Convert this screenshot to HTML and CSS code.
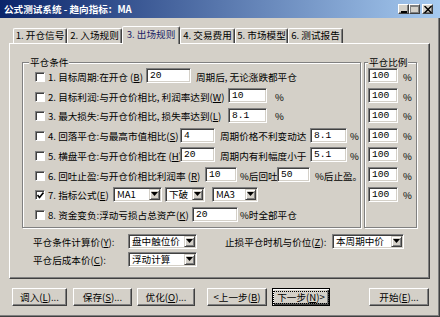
FILE: index.html
```html
<!DOCTYPE html>
<html>
<head>
    <meta charset="UTF-8">
    <title>公式测试系统</title>
    <link rel="stylesheet" href="styles.css">
</head>
<body>
<div class="window">
    <div class="titlebar">
        <span class="title">公式测试系统 - 趋向指标：MA</span>
        <div class="caption-btns">
            <span class="cap-btn"><svg width="8" height="7"><rect x="1" y="5" width="6" height="2"/></svg></span>
            <span class="cap-btn"><svg width="9" height="8"><rect x="0.5" y="0.5" width="8" height="7" fill="none" stroke="#808080"/><rect x="0" y="1" width="9" height="1" fill="#808080"/></svg></span>
            <span class="cap-btn close"><svg width="8" height="7"><path d="M0.5 0 L7.5 7 M7.5 0 L0.5 7" stroke="#000" stroke-width="1.5"/></svg></span>
        </div>
    </div>

    <div class="tabs">
        <span class="tab t1">1. 开仓信号</span>
        <span class="tab t2">2. 入场规则</span>
        <span class="tab t3 active">3. 出场规则</span>
        <span class="tab t4">4. 交易费用</span>
        <span class="tab t5">5. 市场模型</span>
        <span class="tab t6">6. 测试报告</span>
    </div>

    <div class="panel">
        <div class="groups">
            <fieldset class="group cond">
                <legend>平仓条件</legend>
                <div class="rows">
                    <div class="row">
                        <span class="check"></span>
                        <span class="lbl w98">1. 目标周期:在开仓 (<u>B</u>)</span>
                        <span class="edit e45">20</span>
                        <span class="txt m5">周期后, 无论涨跌都平仓</span>
                    </div>
                    <div class="row">
                        <span class="check"></span>
                        <span class="lbl w180">2. 目标利润:与开仓价相比, 利润率达到(<u>W</u>)</span>
                        <span class="edit e39">10</span>
                        <span class="txt m8">%</span>
                    </div>
                    <div class="row">
                        <span class="check"></span>
                        <span class="lbl w180">3. 最大损失:与开仓价相比, 损失率达到(<u>L</u>)</span>
                        <span class="edit e39">8.1</span>
                        <span class="txt m8">%</span>
                    </div>
                    <div class="row">
                        <span class="check"></span>
                        <span class="lbl w132">4. 回落平仓:与最高市值相比(<u>S</u>)</span>
                        <span class="edit e35">4</span>
                        <span class="txt m5 w90">周期价格不利变动达</span>
                        <span class="edit e37">8.1</span>
                        <span class="txt m3">%</span>
                    </div>
                    <div class="row">
                        <span class="check"></span>
                        <span class="lbl w132">5. 横盘平仓:与开仓价相比在 (<u>H</u>)</span>
                        <span class="edit e35">20</span>
                        <span class="txt m5 w90">周期内有利幅度小于</span>
                        <span class="edit e37">5.1</span>
                        <span class="txt m3">%</span>
                    </div>
                    <div class="row">
                        <span class="check"></span>
                        <span class="lbl w157">6. 回吐止盈:与开仓价相比利润率 (<u>R</u>)</span>
                        <span class="edit e32">10</span>
                        <span class="txt m3 w37">%后回吐</span>
                        <span class="edit e33">50</span>
                        <span class="txt m5">%后止盈。</span>
                    </div>
                    <div class="row">
                        <span class="check"><svg width="7" height="7"><path d="M0.5 3 L2.5 5.5 L6.5 0.5" stroke="#000" stroke-width="1.6" fill="none"/></svg></span>
                        <span class="lbl w65">7. 指标公式(<u>E</u>)</span>
                        <span class="combo c49"><span>MA1</span><span class="drop"><svg width="7" height="4"><polygon points="0,0 7,0 3.5,4"/></svg></span></span>
                        <span class="combo c40 m3"><span>下破</span><span class="drop"><svg width="7" height="4"><polygon points="0,0 7,0 3.5,4"/></svg></span></span>
                        <span class="combo c46 m7"><span>MA3</span><span class="drop"><svg width="7" height="4"><polygon points="0,0 7,0 3.5,4"/></svg></span></span>
                    </div>
                    <div class="row">
                        <span class="check"></span>
                        <span class="lbl w144">8. 资金变负:浮动亏损占总资产(<u>K</u>)</span>
                        <span class="edit e46">20</span>
                        <span class="txt m2">%时全部平仓</span>
                    </div>
                </div>
            </fieldset>

            <fieldset class="group ratio">
                <legend>平仓比例</legend>
                <div class="rows">
                    <div class="row"><span class="edit e30">100</span><span class="txt m5">%</span></div>
                    <div class="row"><span class="edit e30">100</span><span class="txt m5">%</span></div>
                    <div class="row"><span class="edit e30">100</span><span class="txt m5">%</span></div>
                    <div class="row"><span class="edit e30">100</span><span class="txt m5">%</span></div>
                    <div class="row"><span class="edit e30">100</span><span class="txt m5">%</span></div>
                    <div class="row"><span class="edit e30">100</span><span class="txt m5">%</span></div>
                    <div class="row"><span class="edit e30">100</span><span class="txt m5">%</span></div>
                </div>
            </fieldset>
        </div>

        <div class="fields">
            <div class="field-row">
                <span class="lbl w95">平仓条件计算价(<u>Y</u>):</span>
                <span class="combo c69"><span>盘中触位价</span><span class="drop"><svg width="7" height="4"><polygon points="0,0 7,0 3.5,4"/></svg></span></span>
                <span class="lbl w107 m28">止损平仓时机与价位(<u>Z</u>):</span>
                <span class="combo c72"><span>本周期中价</span><span class="drop"><svg width="7" height="4"><polygon points="0,0 7,0 3.5,4"/></svg></span></span>
            </div>
            <div class="field-row">
                <span class="lbl w95">平仓后成本价(<u>C</u>):</span>
                <span class="combo c69"><span>浮动计算</span><span class="drop"><svg width="7" height="4"><polygon points="0,0 7,0 3.5,4"/></svg></span></span>
            </div>
        </div>
    </div>

    <div class="buttons">
        <span class="btn b55">调入(<u>L</u>)...</span>
        <span class="btn b59 g6">保存(<u>S</u>)...</span>
        <span class="btn b58 g5">优化(<u>O</u>)...</span>
        <span class="btn b60 g12">&lt;上一步(<u>B</u>)</span>
        <span class="btn b58 g5 default"><span class="focus">下一步(<u>N</u>)&gt;</span></span>
        <span class="btn b60 g39">开始(<u>E</u>)...</span>
    </div>
</div>
</body>
</html>
```

FILE: styles.css
```css
body {
    margin: 0;
    background-color: #d4d0c8;
    font-family: "Noto Sans CJK SC", "Liberation Sans", sans-serif;
    font-size: 9.6px;
    color: #000;
}
u {
    text-decoration: underline;
}
.window {
    width: 440px;
    height: 317px;
    box-sizing: border-box;
    background-color: #d4d0c8;
    box-shadow: inset -1px -1px #404040, inset -2px -2px #808080;
    display: flex;
    flex-direction: column;
}
.titlebar {
    height: 18px;
    flex: none;
    display: flex;
    align-items: center;
    justify-content: space-between;
    padding: 0 7px 0 4px;
    background: linear-gradient(to right, #0a246a, #a6caf0);
    color: #fff;
    font-weight: bold;
}
.caption-btns {
    display: flex;
}
.cap-btn {
    width: 11px;
    height: 10px;
    box-sizing: border-box;
    background-color: #d4d0c8;
    border: 1px solid;
    border-color: #fff #404040 #404040 #fff;
    box-shadow: inset -1px -1px #808080;
    display: flex;
    align-items: center;
    justify-content: center;
}
.cap-btn.close {
    margin-left: 2px;
}
.tabs {
    display: flex;
    align-items: flex-end;
    height: 17px;
    margin-top: 8px;
    padding-left: 13px;
    flex: none;
}
.tab {
    height: 15px;
    box-sizing: border-box;
    border: 1px solid;
    border-bottom: none;
    border-color: #fff #404040 transparent #fff;
    border-radius: 2px 2px 0 0;
    box-shadow: inset -1px 0 #808080;
    text-align: center;
    line-height: 13px;
    white-space: nowrap;
}
.tab.active {
    height: 18px;
    margin-bottom: -1px;
    position: relative;
    z-index: 1;
    background-color: #d4d0c8;
    line-height: 14px;
    color: #1c2466;
}
.t1 { width: 54px; }
.t2 { width: 55px; }
.t3 { width: 58px; }
.t4 { width: 55px; }
.t5 { width: 53px; }
.t6 { width: 55px; }
.panel {
    margin: 0 10px 0 9px;
    height: 236px;
    flex: none;
    box-sizing: border-box;
    border: 1px solid;
    border-color: #fff #404040 #404040 #fff;
    box-shadow: inset -1px -1px #808080;
    padding: 12px 0 0 12px;
}
.groups {
    display: flex;
    gap: 3px;
}
.group {
    margin: 0;
    min-width: 0;
    box-sizing: border-box;
    border: 1px solid #808080;
    box-shadow: inset 1px 1px #fff, 1px 1px #fff;
    padding: 0 0 3px 6px;
}
.group legend {
    padding: 0 1px;
    line-height: 12px;
    background-color: #d4d0c8;
}
.cond {
    width: 339px;
}
.ratio {
    width: 53px;
    padding-left: 3px;
}
.rows {
    margin-top: -2px;
}
.row {
    height: 19.75px;
    display: flex;
    align-items: center;
    white-space: nowrap;
}
.check {
    width: 10px;
    height: 10px;
    flex: none;
    box-sizing: border-box;
    background-color: #fff;
    border: 1px solid;
    border-color: #808080 #fff #fff #808080;
    box-shadow: inset 1px 1px #404040;
    margin: 2px 3px 0 6px;
    display: flex;
    align-items: center;
    justify-content: center;
}
.lbl, .txt {
    flex: none;
    white-space: nowrap;
    padding-top: 2px;
}
.edit {
    flex: none;
    height: 15px;
    box-sizing: border-box;
    background-color: #fff;
    border: 1px solid;
    border-color: #808080 #fff #fff #808080;
    box-shadow: inset 1px 1px #404040, inset -1px -1px #d4d0c8;
    padding: 0 3px;
    line-height: 13px;
    font-family: "Liberation Mono", "Noto Sans CJK SC", monospace;
    font-size: 9.6px;
}
.combo {
    flex: none;
    height: 15px;
    box-sizing: border-box;
    background-color: #fff;
    border: 1px solid;
    border-color: #808080 #fff #fff #808080;
    box-shadow: inset 1px 1px #404040, inset -1px -1px #d4d0c8;
    padding-left: 3px;
    display: flex;
    align-items: center;
    justify-content: space-between;
    line-height: 13px;
}
.drop {
    width: 11px;
    height: 11px;
    box-sizing: border-box;
    margin-right: 1px;
    background-color: #d4d0c8;
    border: 1px solid;
    border-color: #d4d0c8 #404040 #404040 #d4d0c8;
    box-shadow: inset 1px 1px #fff, inset -1px -1px #808080;
    display: flex;
    align-items: center;
    justify-content: center;
}
.w65 { width: 65px; }
.w90 { width: 90px; }
.w37 { width: 37px; }
.w95 { width: 95px; }
.w98 { width: 98px; }
.w107 { width: 107px; }
.w132 { width: 132px; }
.w144 { width: 144px; }
.w157 { width: 157px; }
.w180 { width: 180px; }
.e30 { width: 30px; }
.e32 { width: 32px; }
.e33 { width: 33px; }
.e35 { width: 35px; }
.e37 { width: 37px; }
.e39 { width: 39px; }
.e45 { width: 45px; }
.e46 { width: 46px; }
.c40 { width: 40px; }
.c46 { width: 46px; }
.c49 { width: 49px; }
.c69 { width: 69px; }
.c72 { width: 72px; }
.m2 { margin-left: 2px; }
.m3 { margin-left: 3px; }
.m5 { margin-left: 5px; }
.m7 { margin-left: 7px; }
.m8 { margin-left: 8px; }
.m28 { margin-left: 28px; }
.fields {
    margin: 4px 0 0 11px;
}
.field-row {
    height: 18px;
    display: flex;
    align-items: center;
}
.buttons {
    display: flex;
    margin-top: 9px;
    padding-left: 12px;
    flex: none;
}
.btn {
    height: 18px;
    box-sizing: border-box;
    border: 1px solid;
    border-color: #fff #404040 #404040 #fff;
    box-shadow: inset -1px -1px #808080;
    display: flex;
    align-items: center;
    justify-content: center;
    white-space: nowrap;
}
.btn.default {
    border-color: #000;
    box-shadow: inset 1px 1px #fff, inset -1px -1px #404040, inset -2px -2px #808080;
}
.focus {
    border: 1px dotted #000;
    padding: 0 3px;
    line-height: 11px;
}
.b55 { width: 55px; }
.b58 { width: 58px; }
.b59 { width: 59px; }
.b60 { width: 60px; }
.g5 { margin-left: 5px; }
.g6 { margin-left: 6px; }
.g12 { margin-left: 12px; }
.g39 { margin-left: 39px; }
```
